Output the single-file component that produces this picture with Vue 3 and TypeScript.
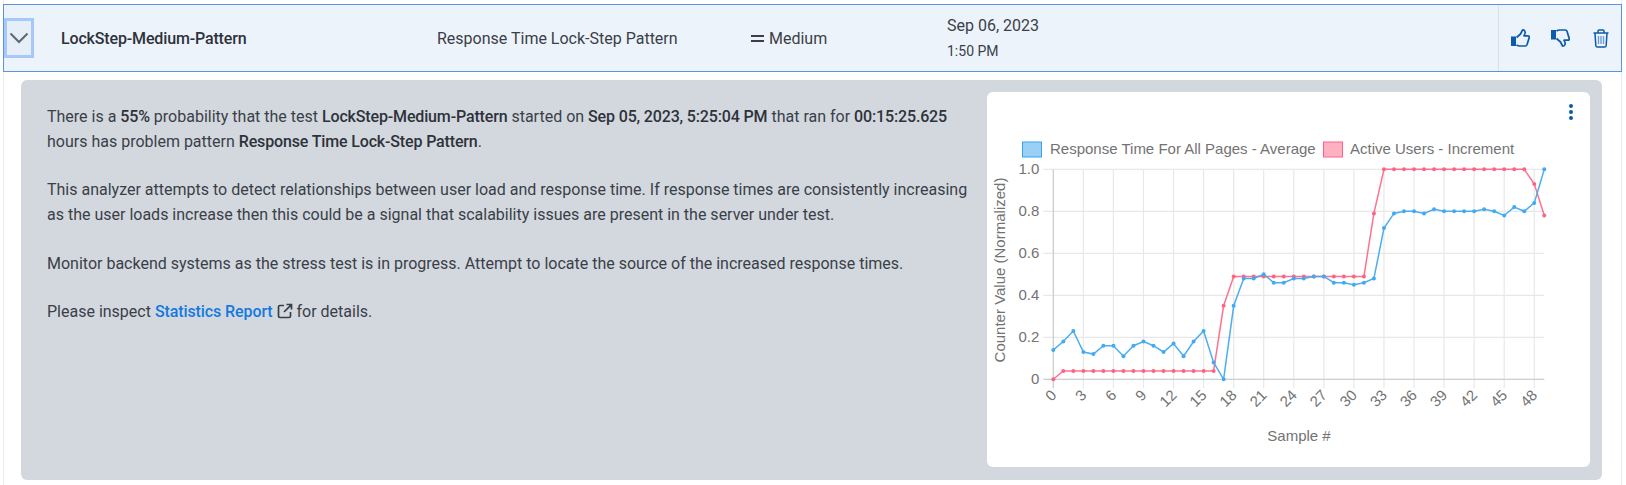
<script setup lang="ts">
const blue: number[] = [.14,.18,.23,.13,.12,.16,.16,.11,.16,.18,.16,.13,.17,.11,.18,.23,.08,0,.35,.48,.48,.5,.46,.46,.48,.48,.49,.49,.46,.46,.45,.46,.48,.72,.79,.8,.8,.79,.81,.8,.8,.8,.8,.81,.8,.78,.82,.8,.84,1]
const pink: number[] = [0,.04,.04,.04,.04,.04,.04,.04,.04,.04,.04,.04,.04,.04,.04,.04,.04,.35,.49,.49,.49,.49,.49,.49,.49,.49,.49,.49,.49,.49,.49,.49,.79,1,1,1,1,1,1,1,1,1,1,1,1,1,1,1,.93,.78]
const X0 = 66.3, DX = 10.02, Y0 = 287.3, H = 210
const px = (i: number) => X0 + i * DX
const py = (v: number) => Y0 - v * H
const pts = (a: number[]) => a.map((v, i) => `${px(i).toFixed(1)},${py(v).toFixed(1)}`).join(' ')
const xTicks: number[] = Array.from({ length: 17 }, (_, i) => i * 3)
const yTicks = [
  { v: 1, t: '1.0' }, { v: .8, t: '0.8' }, { v: .6, t: '0.6' },
  { v: .4, t: '0.4' }, { v: .2, t: '0.2' }, { v: 0, t: '0' }
]
</script>

<template>
  <div class="page">
    <div class="row">
      <button class="toggle" aria-label="Collapse">
        <svg width="20" height="12" viewBox="0 0 20 12"><path d="M1.500 1.500 10 10 18.500 1.500" fill="none" stroke="#5f6872" stroke-width="2"/></svg>
      </button>
      <div class="name">LockStep-Medium-Pattern</div>
      <div class="pattern">Response Time Lock-Step Pattern</div>
      <div class="sev"><span class="eq"></span>Medium</div>
      <div class="date"><div class="d1">Sep 06, 2023</div><div class="d2">1:50 PM</div></div>
      <div class="actions">
        <svg width="19" height="18" viewBox="0 0 19 18"><rect x="0" y="7.500" width="5" height="9.500" fill="#0b5cad"/><path d="M5.500 8.500 9.500 5 11.500 1C13.500 .7 14.500 2.500 14 4.500L13 6.800H17C18 6.800 18.500 7.600 18.200 8.600L16 15.800C15.700 16.600 15.200 17 14.200 17H8.500C7.300 17 6.300 16.500 5.500 15.800" fill="none" stroke="#0b5cad" stroke-width="1.700" stroke-linejoin="round"/></svg>
        <svg width="19" height="18" viewBox="0 0 19 18"><rect x="0" y="1" width="5" height="9.500" fill="#0b5cad"/><path d="M5.500 9.500 9.500 13 11.500 17C13.500 17.300 14.500 15.500 14 13.500L13 11.200H17C18 11.200 18.500 10.400 18.200 9.400L16 2.200C15.700 1.400 15.200 1 14.200 1H8.500C7.300 1 6.300 1.500 5.500 2.200" fill="none" stroke="#0b5cad" stroke-width="1.700" stroke-linejoin="round"/></svg>
        <svg class="trash" width="16" height="19" viewBox="0 0 16 19"><path d="M.500 4H15.500M5 4V2C5 1.400 5.400 1 6 1H10C10.600 1 11 1.400 11 2V4M2 4 2.800 16.500C2.900 17.400 3.500 18 4.400 18H11.600C12.500 18 13.100 17.400 13.200 16.500L14 4" fill="none" stroke="#0b5cad" stroke-width="1.500"/><path d="M5.500 7V15M8 7V15M10.500 7V15" stroke="#6f9fd0" stroke-width="1.400"/></svg>
      </div>
    </div>
    <div class="panel">
      <div class="text">
        <p>There is a <b>55%</b> probability that the test <b>LockStep-Medium-Pattern</b> started on <b>Sep 05, 2023, 5:25:04 PM</b> that ran for <b>00:15:25.625</b> hours has problem pattern <b>Response Time Lock-Step Pattern</b>.</p>
        <p>This analyzer attempts to detect relationships between user load and response time. If response times are consistently increasing as the user loads increase then this could be a signal that scalability issues are present in the server under test.</p>
        <p>Monitor backend systems as the stress test is in progress. Attempt to locate the source of the increased response times.</p>
        <p>Please inspect <a>Statistics Report</a> <svg class="ext" width="16" height="16" viewBox="0 0 16 16"><path d="M7 2.500H3C2 2.500 1.500 3 1.500 4V13C1.500 14 2 14.500 3 14.500H12C13 14.500 13.500 14 13.500 13V9M9.500 1.500H14.500V6.500M14.200 1.800 7 9" fill="none" stroke="#3a3f47" stroke-width="1.700"/></svg> for details.</p>
      </div>
      <div class="card">
        <span class="kebab"><i></i><i></i><i></i></span>
        <svg class="chart" width="603" height="375" viewBox="0 0 603 375">
          <rect x="35.500" y="50" width="19" height="15" fill="rgba(54,162,235,.5)" stroke="#36a2eb" stroke-width="1"/>
          <text x="63" y="62" class="lbl">Response Time For All Pages - Average</text>
          <rect x="336.500" y="50" width="19" height="15" fill="rgba(255,99,132,.5)" stroke="#ff6384" stroke-width="1"/>
          <text x="363" y="62" class="lbl">Active Users - Increment</text>
          <g stroke="#e8e8e8" stroke-width="1.200">
            <line v-for="t in yTicks" :key="t.t" :x1="X0 - 10" :x2="px(49)" :y1="py(t.v)" :y2="py(t.v)"/>
            <line v-for="t in xTicks" :key="t" :x1="px(t)" :x2="px(t)" :y1="py(1)" :y2="Y0 + 9"/>
          </g>
          <line :x1="X0" :x2="X0" :y1="py(1)" :y2="Y0 + 9" stroke="#c8c8c8"/>
          <line :x1="X0 - 10" :x2="px(49)" :y1="Y0" :y2="Y0" stroke="#c8c8c8"/>
          <text v-for="t in yTicks" :key="t.t" :x="X0 - 14" :y="py(t.v) + 5" class="lbl" text-anchor="end">{{ t.t }}</text>
          <text v-for="t in xTicks" :key="'x' + t" class="lbl" text-anchor="end" :transform="`translate(${px(t) + 4} 304) rotate(-45)`">{{ t }}</text>
          <text class="lbl" text-anchor="middle" transform="translate(18 178) rotate(-90)">Counter Value (Normalized)</text>
          <text class="lbl" x="312" y="349" text-anchor="middle">Sample #</text>
          <polyline :points="pts(pink)" fill="none" stroke="#ff6384" stroke-width="1.500" stroke-opacity=".9"/>
          <polyline :points="pts(blue)" fill="none" stroke="#42aaf0" stroke-width="1.500" stroke-opacity=".95"/>
          <circle v-for="(v, i) in pink" :key="'p' + i" :cx="px(i)" :cy="py(v)" r="2" fill="#ff6384"/>
          <circle v-for="(v, i) in blue" :key="'b' + i" :cx="px(i)" :cy="py(v)" r="2" fill="#42aaf0"/>
        </svg>
      </div>
    </div>
  </div>
</template>

<style>
html, body { margin: 0; background: #fff; }
</style>

<style scoped>
.page {
  width: 1619px;
  height: 485px;
  margin-left: 3px;
  box-sizing: border-box;
  padding-top: 4px;
  font-family: Roboto, sans-serif;
  color: #3a3f47;
  border-left: 1px solid #e9ebee;
  border-right: 1px solid #e9ebee;
}
.row {
  margin: 0 -1px;
  height: 68px;
  box-sizing: border-box;
  border: 1px solid #5a93e0;
  background: #edf3fb;
  display: flex;
  align-items: center;
}
.toggle {
  width: 30px;
  height: 40px;
  padding: 0;
  box-sizing: border-box;
  border: 3px solid #a6c8fb;
  background: #e6eef8;
  display: flex;
  align-items: center;
  justify-content: center;
}
.name { width: 376px; margin-left: 27px; font-size: 16px; font-weight: 500; letter-spacing: -.15px; color: #2e323a; }
.pattern { width: 314px; font-size: 16px; }
.sev { width: 196px; font-size: 16px; display: flex; align-items: center; }
.eq { width: 13px; height: 3px; margin-right: 5px; border-top: 2px solid #3a3f47; border-bottom: 2px solid #3a3f47; }
.date { width: 551px; }
.d1 { font-size: 16px; line-height: 20px; }
.d2 { font-size: 14px; line-height: 18px; margin-top: 6px; }
.actions {
  flex: 1;
  align-self: stretch;
  border-left: 1px solid #d9dfe6;
  display: flex;
  align-items: center;
  gap: 21px;
  padding-left: 12px;
}
.trash { margin-left: 2px; }
.panel {
  margin: 8px 19px 0 17px;
  height: 400px;
  box-sizing: border-box;
  background: #d3d8df;
  border-radius: 6px;
  padding: 12px 12px 13px 26px;
  display: flex;
  justify-content: space-between;
}
.text { width: 925px; font-size: 16px; line-height: 24.500px; padding-top: 13px; font-weight: 400; }
.text p { margin: 0 0 24.300px; }
.text b { font-weight: 500; letter-spacing: -.15px; color: #2e323a; }
.text a { color: #1479e0; font-weight: 500; letter-spacing: -.1px; }
.ext { vertical-align: -2px; }
.card {
  position: relative;
  width: 603px;
  height: 375px;
  background: #fff;
  border-radius: 6px;
  flex: none;
}
.chart { display: block; }
.kebab {
  position: absolute;
  right: 17px;
  top: 12px;
  display: flex;
  flex-direction: column;
  gap: 2px;
}
.kebab i { width: 4px; height: 4px; border-radius: 50%; background: #0b5cad; display: block; }
.lbl { font: 15px "Liberation Sans", sans-serif; fill: #737373; }
</style>
